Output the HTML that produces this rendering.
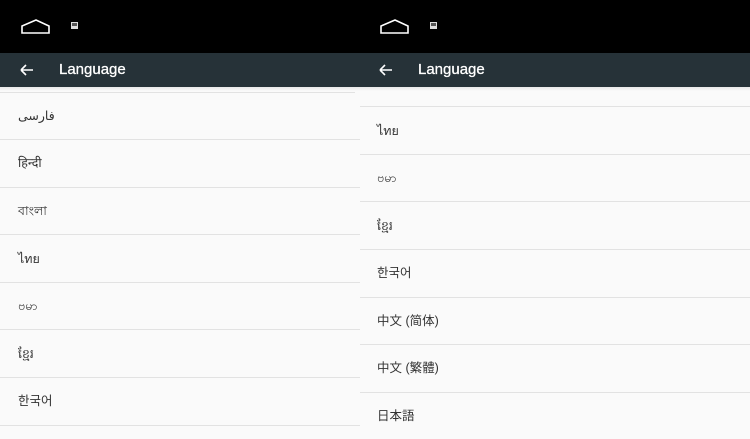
<!DOCTYPE html>
<html><head><meta charset="utf-8"><style>
*{margin:0;padding:0;box-sizing:border-box}
body{width:750px;height:439px;overflow:hidden;background:#fafafa;position:relative;font-family:"Liberation Sans","DejaVu Sans","Noto Sans CJK KR","Noto Sans CJK SC",sans-serif}
#sb{position:absolute;left:0;top:0;width:750px;height:53px;background:#000}
#tb{position:absolute;left:0;top:53px;width:750px;height:34px;background:#263238}
.title{position:absolute;top:60px;color:#fff;font-size:15px;font-weight:normal;line-height:20px;-webkit-text-stroke:0.3px #fff}
.row{position:absolute;height:20px;line-height:20px;font-size:12.5px;color:#333}
.div{position:absolute;height:1px;background:#e2e2e2}
.shadow{position:absolute;top:87px;height:4px;background:linear-gradient(#e8e8e8,#fafafa)}
</style></head><body>
<div id="sb"></div>
<svg style="position:absolute;left:0;top:0" width="750" height="53">
<path d="M22 33 L22 26 L36 20 L49 26 L49 33 Z" fill="none" stroke="#fff" stroke-width="1.6"/>
<rect x="71" y="22" width="7" height="7" fill="#ddd"/><rect x="72" y="23" width="5" height="3" fill="#555"/>
<path d="M381 33 L381 26 L395 20 L408 26 L408 33 Z" fill="none" stroke="#fff" stroke-width="1.6"/>
<rect x="430" y="22" width="7" height="7" fill="#ddd"/><rect x="431" y="23" width="5" height="3" fill="#555"/>
</svg>
<div id="tb"></div>
<svg style="position:absolute;left:0;top:53px" width="750" height="34">
<path d="M21 17 H33 M21 17 L26 12 M21 17 L26 22" stroke="#fff" stroke-width="1.6" fill="none"/>
<path d="M380 17 H392 M380 17 L385 12 M380 17 L385 22" stroke="#fff" stroke-width="1.6" fill="none"/>
</svg>
<div class="title" style="left:59px">Language</div>
<div class="title" style="left:418px">Language</div>
<div class="shadow" style="left:0;width:360px"></div>
<div class="shadow" style="left:360px;width:390px"></div>

<div class="div" style="left:0;top:92px;width:355px"></div>
<div class="div" style="left:0;top:139px;width:360px"></div>
<div class="div" style="left:0;top:187px;width:360px"></div>
<div class="div" style="left:0;top:234px;width:360px"></div>
<div class="div" style="left:0;top:282px;width:360px"></div>
<div class="div" style="left:0;top:329px;width:360px"></div>
<div class="div" style="left:0;top:377px;width:360px"></div>
<div class="div" style="left:0;top:425px;width:360px"></div>

<div class="row" style="left:18px;top:106px">فارسی</div>
<div class="row" style="left:18px;top:153px">हिन्दी</div>
<div class="row" style="left:18px;top:201px">বাংলা</div>
<div class="row" style="left:18px;top:249px">ไทย</div>
<div class="row" style="left:18px;top:296px">ဗမာ</div>
<div class="row" style="left:18px;top:344px">ខ្មែរ</div>
<div class="row" style="left:18px;top:391px">한국어</div>

<div class="div" style="left:360px;top:106px;width:390px"></div>
<div class="div" style="left:360px;top:154px;width:390px"></div>
<div class="div" style="left:360px;top:201px;width:390px"></div>
<div class="div" style="left:360px;top:249px;width:390px"></div>
<div class="div" style="left:360px;top:297px;width:390px"></div>
<div class="div" style="left:360px;top:344px;width:390px"></div>
<div class="div" style="left:360px;top:392px;width:390px"></div>

<div class="row" style="left:377px;top:121px">ไทย</div>
<div class="row" style="left:377px;top:168px">ဗမာ</div>
<div class="row" style="left:377px;top:216px">ខ្មែរ</div>
<div class="row" style="left:377px;top:263px">한국어</div>
<div class="row" style="left:377px;top:311px">中文 (简体)</div>
<div class="row" style="left:377px;top:358px">中文 (繁體)</div>
<div class="row" style="left:377px;top:406px">日本語</div>
</body></html>
